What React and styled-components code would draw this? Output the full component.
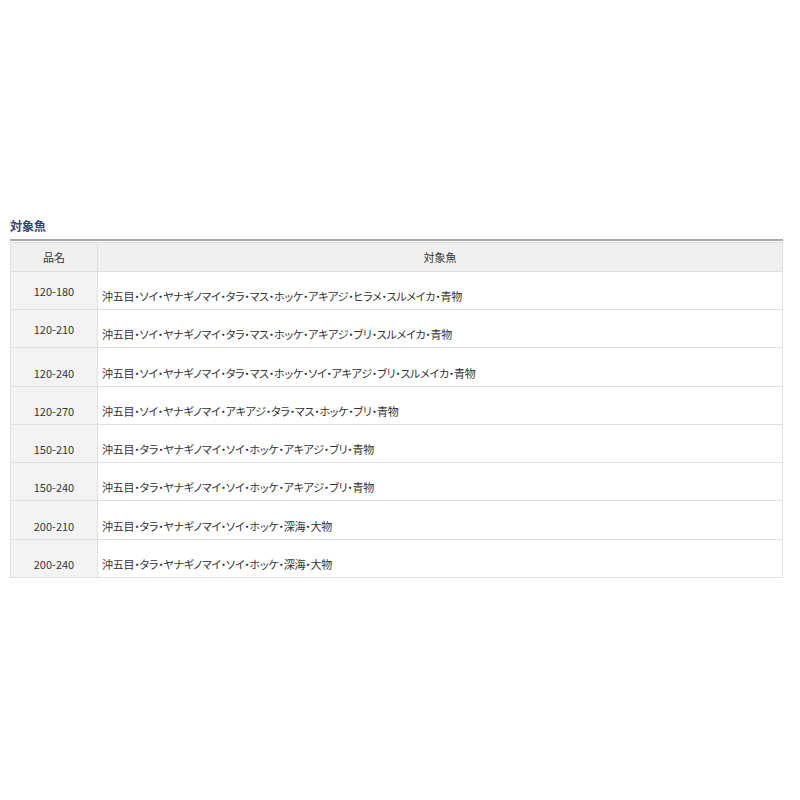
import React from "react";
import styled, { createGlobalStyle } from "styled-components";

const GlobalStyle = createGlobalStyle`
  html, body {
    margin: 0;
    padding: 0;
    background: #fff;
  }
  body {
    font-family: "Noto Sans CJK JP", "Liberation Sans", sans-serif;
    color: #333;
  }
`;

const Page = styled.div`
  width: 800px;
  box-sizing: border-box;
  padding: 218px 17px 0 10px;
`;

const Title = styled.h3`
  margin: 0;
  font-size: 12px;
  line-height: 16px;
  font-weight: bold;
  color: #34456b;
  font-feature-settings: "palt";
  padding-bottom: 5px;
  border-bottom: 2px solid #a9a9a9;
`;

const Table = styled.table`
  width: 100%;
  margin-top: 1px;
  border-collapse: collapse;
  font-size: 11px;
  font-feature-settings: "palt";
  color: #333;
`;

const HeadCell = styled.th`
  height: 28px;
  padding: 0;
  font-weight: normal;
  text-align: center;
  vertical-align: middle;
  background: #f0f0f0;
  border: 1px solid #dedede;
  width: ${(p) => (p.$narrow ? "86px" : "auto")};
`;

const Row = styled.tr`
  height: ${(p) => (p.$tall ? "39px" : "38px")};
`;

const NameCell = styled.td`
  text-align: center;
  vertical-align: middle;
  background: #f3f3f3;
  border: 1px solid #e0e0e0;
  padding: ${(p) => (p.$raised ? "0" : "11px 0 0")};
`;

const FishCell = styled.td`
  text-align: left;
  vertical-align: middle;
  background: #fff;
  border: 1px solid #e0e0e0;
  padding: 11px 0 0 4px;
  letter-spacing: -0.25px;
`;

const rows = [
  { name: "120-180", fish: "沖五目・ソイ・ヤナギノマイ・タラ・マス・ホッケ・アキアジ・ヒラメ・スルメイカ・青物", raised: true },
  { name: "120-210", fish: "沖五目・ソイ・ヤナギノマイ・タラ・マス・ホッケ・アキアジ・ブリ・スルメイカ・青物", raised: true },
  { name: "120-240", fish: "沖五目・ソイ・ヤナギノマイ・タラ・マス・ホッケ・ソイ・アキアジ・ブリ・スルメイカ・青物", tall: true },
  { name: "120-270", fish: "沖五目・ソイ・ヤナギノマイ・アキアジ・タラ・マス・ホッケ・ブリ・青物" },
  { name: "150-210", fish: "沖五目・タラ・ヤナギノマイ・ソイ・ホッケ・アキアジ・ブリ・青物" },
  { name: "150-240", fish: "沖五目・タラ・ヤナギノマイ・ソイ・ホッケ・アキアジ・ブリ・青物" },
  { name: "200-210", fish: "沖五目・タラ・ヤナギノマイ・ソイ・ホッケ・深海・大物", tall: true },
  { name: "200-240", fish: "沖五目・タラ・ヤナギノマイ・ソイ・ホッケ・深海・大物" },
];

export default function App() {
  return (
    <>
      <GlobalStyle />
      <Page>
        <Title>対象魚</Title>
        <Table>
          <thead>
            <tr>
              <HeadCell $narrow>品名</HeadCell>
              <HeadCell>対象魚</HeadCell>
            </tr>
          </thead>
          <tbody>
            {rows.map((r) => (
              <Row key={r.name} $tall={r.tall}>
                <NameCell $raised={r.raised}>{r.name}</NameCell>
                <FishCell>{r.fish}</FishCell>
              </Row>
            ))}
          </tbody>
        </Table>
      </Page>
    </>
  );
}
